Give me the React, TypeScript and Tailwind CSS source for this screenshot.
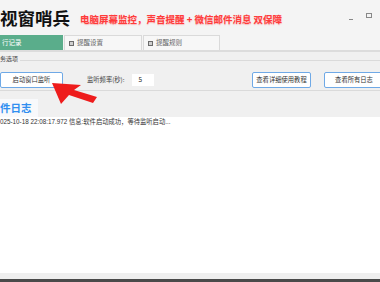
const cjk = { fontFamily: '"Noto Sans CJK SC", "Noto Sans", sans-serif' };

const TabIcon = () => (
    <span className="inline-block h-[5px] w-[5px] border border-[#6b6b6b] bg-[#cfcfcf]" />
);

const Tab = ({ label, active, width }: { label: string; active?: boolean; width: string }) => (
    <div
        className={
            active
                ? 'flex h-full items-center bg-[#5aad8b] pl-[2px] text-[6.5px] text-white ' + width
                : 'flex h-full items-center gap-[3px] border border-b-0 border-[#dadada] bg-[#f7f7f7] pl-[4px] text-[6.5px] text-[#666] ' + width
        }
    >
        {!active && <TabIcon />}
        <span>{label}</span>
    </div>
);

const OutlineButton = ({ label, className }: { label: string; className: string }) => (
    <button
        type="button"
        className={
            'flex h-[16px] shrink-0 items-center justify-center whitespace-nowrap rounded-[2px] border border-[#6fa9e6] bg-white text-[6.3px] text-[#333] ' +
            className
        }
    >
        {label}
    </button>
);

export default function App() {
    return (
        <div className="relative flex h-[282px] w-[380px] flex-col overflow-hidden bg-[#f4f4f4]" style={cjk}>
            {/* header */}
            <div className="flex h-[35px] items-center">
                <div className="text-[17.5px] font-bold leading-none text-[#111]">视窗哨兵</div>
                <div className="ml-[10px] mt-[4px] whitespace-nowrap text-[9.5px] font-bold leading-none text-[#ff3b3b] [text-shadow:0_1px_1px_rgba(255,80,80,0.35)]">
                    电脑屏幕监控，声音提醒 + 微信邮件消息 双保障
                </div>
                <div className="ml-auto mr-[8px] flex items-center gap-[13px]">
                    <span className="mt-[3px] block h-px w-[4px] bg-[#888]" />
                    <span className="mb-[4px] block h-[5px] w-[6px] border border-[#888]" />
                </div>
            </div>

            {/* tabs */}
            <div className="flex h-[15px] items-end gap-px">
                <Tab label="行记录" active width="w-[63px]" />
                <Tab label="提醒设置" width="w-[78px]" />
                <Tab label="提醒规则" width="w-[77px]" />
            </div>
            <div className="h-[2px] bg-[#dcdcdc]" />

            {/* task options */}
            <div className="flex flex-col bg-[#f0f0f0]">
                <div className="mt-[4px] flex h-[6px] items-center">
                    <span className="text-[6px] leading-none text-[#444]">务选项</span>
                    <span className="ml-[2px] mt-[2px] h-px flex-1 bg-[#dadada]" />
                </div>
                <div className="mt-[10px] flex h-[16px] items-center">
                    <OutlineButton label="启动窗口监听" className="w-[63px]" />
                    <span className="ml-[24px] shrink-0 whitespace-nowrap text-[6.3px] leading-none text-[#444]">监听频率(秒):</span>
                    <div className="ml-[7px] flex h-[12px] w-[22px] shrink-0 items-center bg-white pl-[7px] text-[6.5px] text-[#222]">
                        5
                    </div>
                    <OutlineButton label="查看详细使用教程" className="ml-auto w-[59px]" />
                    <OutlineButton label="查看所有日志" className="-mr-[4px] ml-[13px] w-[60px]" />
                </div>
                <div className="mt-[2px] h-px bg-[#dadada]" />

                {/* log heading */}
                <div className="flex h-[26px] items-end">
                    <div className="flex h-[18px] w-[38px] items-center bg-[#f8f9fb] text-[10.5px] font-bold leading-none text-[#2f8ef0]">
                        件日志
                    </div>
                </div>
            </div>

            {/* log area */}
            <div className="flex-1 bg-white">
                <div className="whitespace-nowrap text-[6.3px] leading-[9px] text-[#333]" style={{ fontFamily: '"Liberation Sans", "Noto Sans CJK SC", sans-serif' }}>
                    025-10-18 22:08:17.972 信息:软件启动成功，等待监听启动...
                </div>
            </div>
            <div className="h-[6px] bg-[#efefef]" />
            <div className="h-[3px] bg-[#4a4a4a]" />

            {/* red arrow annotation */}
            <svg className="pointer-events-none absolute left-0 top-0" width="380" height="282" viewBox="0 0 380 282">
                <polygon points="52,83 81,85 74,90 97,97 93,103 69,95 61,104" fill="#ee1c1c" />
            </svg>
        </div>
    );
}
